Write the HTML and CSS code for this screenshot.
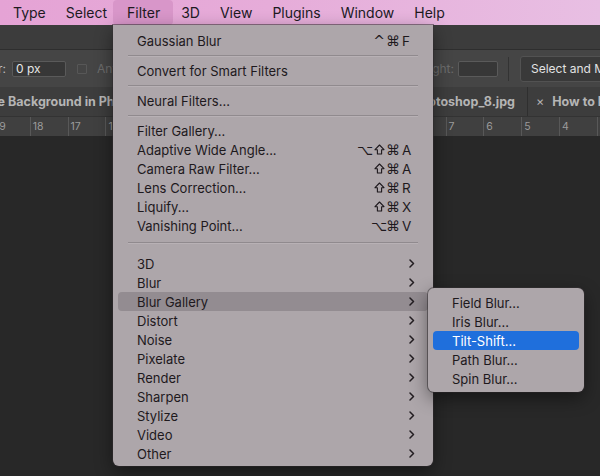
FILE: index.html
```html
<!DOCTYPE html>
<html lang="en">
<head>
  <meta charset="UTF-8">
  <title>Filter menu – Photoshop</title>
  <link rel="stylesheet" href="styles.css">
</head>
<body>
  <div class="menubar">
    <span class="mb-item">Type</span>
    <span class="mb-item">Select</span>
    <span class="mb-item active">Filter</span>
    <span class="mb-item">3D</span>
    <span class="mb-item">View</span>
    <span class="mb-item">Plugins</span>
    <span class="mb-item">Window</span>
    <span class="mb-item">Help</span>
  </div>

  <div class="app">
    <div class="topstrip"></div>

    <div class="options">
      <div class="opt-left">
        <span class="opt-label">r:</span>
        <span class="field">0 px</span>
        <span class="checkbox"></span>
        <span class="opt-faded">Anti-alias</span>
      </div>
      <div class="opt-right">
        <span class="opt-faded clip">Height:</span>
        <span class="field small"></span>
        <span class="vdivider"></span>
        <span class="opt-button">Select and Mask...</span>
      </div>
    </div>

    <div class="tabs">
      <div class="tab first">Remove Background in Photoshop_7.jpg</div>
      <div class="tab second">Remove Background in Photoshop_8.jpg</div>
      <div class="tab third"><span class="tab-close">×</span>How to Blur</div>
    </div>

    <div class="ruler">
      <span>19</span><span>18</span><span>17</span><span>16</span><span>15</span>
      <span>14</span><span>13</span><span>12</span><span>11</span><span>10</span>
      <span>9</span><span>8</span><span>7</span><span>6</span><span>5</span>
      <span>4</span><span>3</span>
    </div>

    <div class="canvas"></div>
  </div>

  <!-- Filter dropdown -->
  <div class="menu filter-menu">
    <div class="item">Gaussian Blur
      <span class="keys"><span class="mod">^</span><span class="mod">⌘</span><span class="key">F</span></span>
    </div>
    <div class="sep"></div>
    <div class="item">Convert for Smart Filters</div>
    <div class="sep"></div>
    <div class="item">Neural Filters...</div>
    <div class="sep"></div>
    <div class="item">Filter Gallery...</div>
    <div class="item">Adaptive Wide Angle...
      <span class="keys"><span class="mod">⌥</span><span class="mod"><svg class="shift" viewBox="0 0 11 11"><path d="M5.5 1L10 5.7H7.6V10H3.4V5.7H1Z"/></svg></span><span class="mod">⌘</span><span class="key">A</span></span>
    </div>
    <div class="item">Camera Raw Filter...
      <span class="keys"><span class="mod"><svg class="shift" viewBox="0 0 11 11"><path d="M5.5 1L10 5.7H7.6V10H3.4V5.7H1Z"/></svg></span><span class="mod">⌘</span><span class="key">A</span></span>
    </div>
    <div class="item">Lens Correction...
      <span class="keys"><span class="mod"><svg class="shift" viewBox="0 0 11 11"><path d="M5.5 1L10 5.7H7.6V10H3.4V5.7H1Z"/></svg></span><span class="mod">⌘</span><span class="key">R</span></span>
    </div>
    <div class="item">Liquify...
      <span class="keys"><span class="mod"><svg class="shift" viewBox="0 0 11 11"><path d="M5.5 1L10 5.7H7.6V10H3.4V5.7H1Z"/></svg></span><span class="mod">⌘</span><span class="key">X</span></span>
    </div>
    <div class="item">Vanishing Point...
      <span class="keys"><span class="mod">⌥</span><span class="mod">⌘</span><span class="key">V</span></span>
    </div>
    <div class="sep wide"></div>
    <div class="item sub">3D <svg class="chev" viewBox="0 0 6 9"><path d="M1 1l3.5 3.5L1 8"/></svg></div>
    <div class="item sub">Blur <svg class="chev" viewBox="0 0 6 9"><path d="M1 1l3.5 3.5L1 8"/></svg></div>
    <div class="item sub open">Blur Gallery <svg class="chev" viewBox="0 0 6 9"><path d="M1 1l3.5 3.5L1 8"/></svg></div>
    <div class="item sub">Distort <svg class="chev" viewBox="0 0 6 9"><path d="M1 1l3.5 3.5L1 8"/></svg></div>
    <div class="item sub">Noise <svg class="chev" viewBox="0 0 6 9"><path d="M1 1l3.5 3.5L1 8"/></svg></div>
    <div class="item sub">Pixelate <svg class="chev" viewBox="0 0 6 9"><path d="M1 1l3.5 3.5L1 8"/></svg></div>
    <div class="item sub">Render <svg class="chev" viewBox="0 0 6 9"><path d="M1 1l3.5 3.5L1 8"/></svg></div>
    <div class="item sub">Sharpen <svg class="chev" viewBox="0 0 6 9"><path d="M1 1l3.5 3.5L1 8"/></svg></div>
    <div class="item sub">Stylize <svg class="chev" viewBox="0 0 6 9"><path d="M1 1l3.5 3.5L1 8"/></svg></div>
    <div class="item sub">Video <svg class="chev" viewBox="0 0 6 9"><path d="M1 1l3.5 3.5L1 8"/></svg></div>
    <div class="item sub">Other <svg class="chev" viewBox="0 0 6 9"><path d="M1 1l3.5 3.5L1 8"/></svg></div>
  </div>

  <!-- Blur Gallery submenu -->
  <div class="menu submenu">
    <div class="item">Field Blur...</div>
    <div class="item">Iris Blur...</div>
    <div class="item selected">Tilt-Shift...</div>
    <div class="item">Path Blur...</div>
    <div class="item">Spin Blur...</div>
  </div>
</body>
</html>
```

FILE: styles.css
```css
body {
  margin: 0;
  width: 600px;
  height: 476px;
  overflow: hidden;
  position: relative;
  font-family: Inter, "Helvetica Neue", Arial, sans-serif;
  background: #282828;
  display: flex;
  flex-direction: column;
}

/* macOS menu bar */
.menubar {
  height: 25px;
  display: flex;
  align-items: stretch;
  padding-left: 3px;
  background: linear-gradient(90deg, #e5a3d5 0%, #e6acd9 45%, #e8bfe3 100%);
  font-size: 14px;
  color: #201a1f;
}
.mb-item { display: flex; align-items: center; padding: 0 10px; }
.mb-item.active { background: #d896c9; border-radius: 4px; padding: 0 13px 0 14px; margin: 0 -2px 0 -4px; }

.app { flex: 1; display: flex; flex-direction: column; }
.topstrip { height: 24px; background: #3c3c3c; border-bottom: 1px solid #2e2e2e; }

/* options bar */
.options {
  height: 37px;
  background: #454545;
  display: flex;
  justify-content: space-between;
  align-items: center;
  font-size: 12px;
  color: #cfcfcf;
  overflow: hidden;
}
.opt-left, .opt-right { display: flex; align-items: center; }
.opt-label { margin-left: -2px; width: 14px; color: #bdbdbd; }
.field {
  width: 46px; height: 14px; line-height: 14px;
  padding: 0 3px;
  background: #373737;
  border: 1px solid #5a5a5a;
  border-radius: 2px;
  color: #e6e6e6;
}
.field.small { width: 32px; margin-left: 4px; }
.checkbox { width: 8px; height: 8px; border: 1px solid #575757; margin: 0 10px 0 11px; border-radius: 1px; }
.opt-faded { color: #6c6c6c; white-space: nowrap; }
.opt-faded.clip { width: 21px; overflow: hidden; display: flex; justify-content: flex-end; }
.vdivider { width: 1px; height: 24px; background: #333; margin: 0 11px 0 10px; }
.opt-button {
  height: 24px; line-height: 24px;
  padding: 0 10px;
  width: 90px;
  white-space: nowrap;
  overflow: hidden;
  background: #393939;
  border: 1px solid #525252;
  border-radius: 3px;
  color: #e2e2e2;
  margin-right: -32px;
}

/* document tabs */
.tabs {
  height: 29px;
  background: #3d3d3d;
  display: flex;
  font-size: 12.5px;
  font-weight: 700;
  color: #b5b5b5;
  white-space: nowrap;
  overflow: hidden;
}
.tab { display: flex; align-items: center; padding: 0 10px; border-right: 1px solid #2f2f2f; flex-shrink: 0; }
.tab.first { margin-left: -44px; width: 260px; padding: 0; overflow: hidden; }
.tab.second { width: 298px; justify-content: flex-end; padding: 0 12px 0 0; overflow: hidden; }
.tab.third { padding-left: 8px; }
.tab-close { font-weight: 400; margin-right: 8px; }

/* ruler */
.ruler {
  height: 19px;
  background: #404040;
  border-top: 1px solid #333;
  display: flex;
  margin-left: -8px;
  font-size: 10.5px;
  color: #9b9b9b;
  overflow: hidden;
}
.ruler span {
  flex: 0 0 37.8px;
  box-sizing: border-box;
  border-left: 1px solid #585858;
  padding: 3px 0 0 2px;
}
.canvas { flex: 1; background: #282828; }

/* menus */
.menu {
  position: absolute;
  background: #ada6aa;
  color: #1e191d;
  font-size: 13px;
  box-shadow: 0 6px 18px rgba(0,0,0,0.45), 0 0 0 1px rgba(60,55,58,0.55);
}
.filter-menu {
  left: 113px;
  top: 25px;
  width: 320px;
  padding: 6px 0 3px;
  border-radius: 0 0 6px 6px;
}
.item {
  height: 19px;
  display: flex;
  align-items: center;
  justify-content: space-between;
  padding: 0 19px 0 19px;
  margin: 0 5px;
  border-radius: 4px;
  white-space: nowrap;
}
.item.open { background: #938c91; }
.sep { height: 11px; position: relative; }
.sep::after {
  content: "";
  position: absolute;
  left: 15px; right: 15px; top: 5px;
  height: 1px;
  background: #908a8e;
  box-shadow: 0 1px 0 #b8b1b5;
}
.sep.wide { height: 19px; }
.sep.wide::after { top: 7px; }

.keys { display: flex; align-items: center; margin-right: -5px; font-family: "DejaVu Sans", sans-serif; font-size: 14px; }
.mod { width: 14px; display: flex; justify-content: center; align-items: center; }
.shift { width: 11px; height: 11px; }
.shift path { fill: none; stroke: #1e191d; stroke-width: 1.1; stroke-linejoin: round; }
.key { width: 12px; padding-left: 2px; font-family: Inter, sans-serif; font-size: 13.5px; }

.chev { width: 6px; height: 9px; margin-right: -6px; }
.chev path { fill: none; stroke: #231e22; stroke-width: 1.5; stroke-linecap: round; stroke-linejoin: round; }

.submenu {
  left: 428px;
  top: 288px;
  width: 156px;
  padding: 5px 0 4px;
  border-radius: 6px;
}
.submenu .item { padding: 0 19px; }
.item.selected { background: #1f6fdc; color: #fff; }
```
